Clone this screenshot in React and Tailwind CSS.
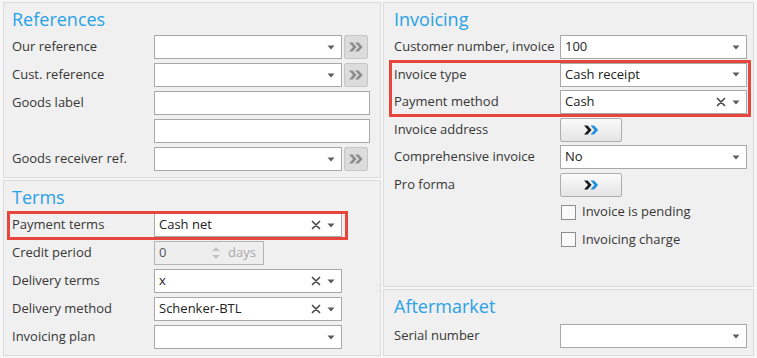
import React from "react";

const Arrow = () => (
  <svg width="8" height="5" viewBox="0 0 8 5" className="shrink-0">
    <polygon points="0.5,0.5 7.5,0.5 4,4.5" fill="#5c5c5c" />
  </svg>
);

const XIcon = () => (
  <svg width="10" height="10" viewBox="0 0 10 10" className="shrink-0">
    <path d="M1.5 1.5 L8.5 8.5 M8.5 1.5 L1.5 8.5" stroke="#4a4a4a" strokeWidth="1.7" strokeLinecap="round" />
  </svg>
);

const Chev = ({ x = 0, fill }) => (
  <polygon
    points={`${x},0.5 ${x + 3.6},0.5 ${x + 7.6},5 ${x + 3.6},9.5 ${x},9.5 ${x + 4},5`}
    fill={fill}
  />
);

const Combo = ({ value = "", clear = false, w = "w-[188px]" }) => (
  <div className={`${w} h-[24px] bg-white border border-[#a8a8a8] flex items-center pl-[4px] pr-[6px]`}>
    <span className="flex-1 text-[#222] whitespace-nowrap">{value}</span>
    {clear && <span className="mr-[6px] flex"><XIcon /></span>}
    <Arrow />
  </div>
);

const GrayGo = () => (
  <div className="w-[24px] h-[24px] ml-[2px] rounded-[2px] bg-[#dcdcdc] border border-[#c6c6c6] flex items-center justify-center">
    <svg width="14" height="10" viewBox="0 0 14 10">
      <Chev x={0} fill="#8c8c8c" />
      <Chev x={6} fill="#8c8c8c" />
    </svg>
  </div>
);

const BlueGo = () => (
  <div className="w-[62px] h-[24px] rounded-[2px] border border-[#adadad] bg-gradient-to-b from-[#fbfbfb] to-[#e4e4e4] flex items-center justify-center">
    <svg width="15" height="10" viewBox="0 0 15 10">
      <Chev x={0} fill="#1c1c1c" />
      <Chev x={6.5} fill="#1e90e2" />
    </svg>
  </div>
);

const Text = ({ w = "w-[216px]" }) => (
  <div className={`${w} h-[24px] bg-white border border-[#a8a8a8]`} />
);

const Row = ({ label, lw = "w-[142px]", children }) => (
  <div className="h-[24px] flex items-center">
    <div className={`${lw} shrink-0 whitespace-nowrap`}>{label}</div>
    {children}
  </div>
);

const Title = ({ children }) => (
  <div className="h-[24px] leading-[24px] text-[18px] text-[#29a1e7]">{children}</div>
);

const Check = ({ label }) => (
  <div className="h-[24px] flex items-center">
    <div className="w-[166px] shrink-0" />
    <div className="w-[15px] h-[15px] ml-[1px] bg-[#fafafa] border border-[#8e8e8e]" />
    <span className="ml-[6px] whitespace-nowrap">{label}</span>
  </div>
);

export default function App() {
  return (
    <div className="w-[757px] h-[358px] overflow-hidden bg-[#f6f6f6] flex gap-[2px] pl-[3px] pt-[2px] font-['Open_Sans',sans-serif] text-[13px] text-[#363636]">
      <div className="w-[378px] flex flex-col gap-[2px]">
        <div className="h-[176px] bg-[#f0f0f0] border border-[#dcdcdc] pl-[8px] pt-[4px] flex flex-col gap-[4px]">
          <Title>References</Title>
          <Row label="Our reference">
            <Combo />
            <GrayGo />
          </Row>
          <Row label="Cust. reference">
            <Combo />
            <GrayGo />
          </Row>
          <Row label="Goods label">
            <Text />
          </Row>
          <Row label="">
            <Text />
          </Row>
          <Row label="Goods receiver ref.">
            <Combo />
            <GrayGo />
          </Row>
        </div>
        <div className="h-[176px] bg-[#f0f0f0] border border-[#dcdcdc] pl-[8px] pt-[4px] flex flex-col gap-[4px]">
          <Title>Terms</Title>
          <div className="relative">
            <Row label="Payment terms">
              <Combo value="Cash net" clear />
            </Row>
            <div className="absolute left-[-5px] top-[-2px] w-[341px] h-[29px] border-[3px] border-[#e8453c] pointer-events-none" />
          </div>
          <Row label="Credit period">
            <div className="w-[110px] h-[24px] bg-[#eeeeee] border border-[#b4b4b4] flex items-center pl-[4px]">
              <span className="text-[#555] w-[52px]">0</span>
              <svg width="10" height="16" viewBox="0 0 10 16" className="shrink-0">
                <polygon points="1,6 9,6 5,2" fill="#c4c4c4" />
                <polygon points="1,10 9,10 5,14" fill="#c4c4c4" />
              </svg>
              <span className="ml-[7px] text-[#a9a9a9]">days</span>
            </div>
          </Row>
          <Row label="Delivery terms">
            <Combo value="x" clear />
          </Row>
          <Row label="Delivery method">
            <Combo value="Schenker-BTL" clear />
          </Row>
          <Row label="Invoicing plan">
            <Combo />
          </Row>
        </div>
      </div>
      <div className="w-[371px] flex flex-col gap-[2px]">
        <div className="h-[285px] bg-[#f0f0f0] border border-[#dcdcdc] pl-[10px] pt-[4px] flex flex-col gap-[3.5px]">
          <div className="mb-[0.5px]">
            <Title>Invoicing</Title>
          </div>
          <Row label="Customer number, invoice" lw="w-[166px]">
            <Combo value="100" w="w-[187px]" />
          </Row>
          <div className="relative flex flex-col gap-[3.5px]">
            <Row label="Invoice type" lw="w-[166px]">
              <Combo value="Cash receipt" w="w-[187px]" />
            </Row>
            <Row label="Payment method" lw="w-[166px]">
              <Combo value="Cash" clear w="w-[187px]" />
            </Row>
            <div className="absolute left-[-5px] top-[-3px] w-[362px] h-[57px] border-[3px] border-[#e8453c] pointer-events-none" />
          </div>
          <Row label="Invoice address" lw="w-[166px]">
            <BlueGo />
          </Row>
          <Row label="Comprehensive invoice" lw="w-[166px]">
            <Combo value="No" w="w-[187px]" />
          </Row>
          <Row label="Pro forma" lw="w-[166px]">
            <BlueGo />
          </Row>
          <Check label="Invoice is pending" />
          <Check label="Invoicing charge" />
        </div>
        <div className="h-[67px] bg-[#f0f0f0] border border-[#dcdcdc] pl-[10px] pt-[4px] flex flex-col gap-[6px]">
          <Title>Aftermarket</Title>
          <Row label="Serial number" lw="w-[166px]">
            <Combo w="w-[187px]" />
          </Row>
        </div>
      </div>
    </div>
  );
}
